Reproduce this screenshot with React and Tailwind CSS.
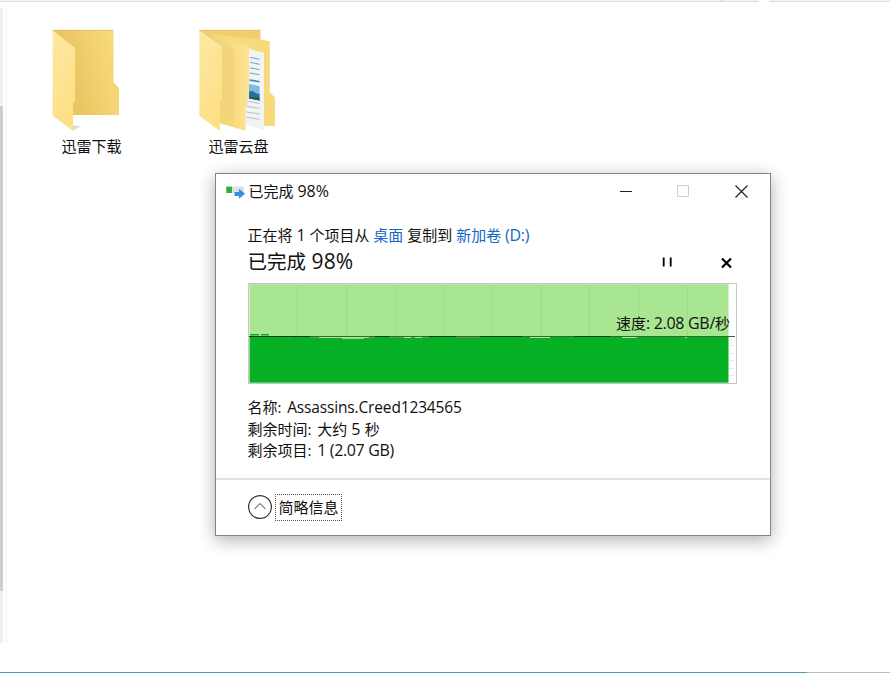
import clsx from 'clsx';

const Latin = ({ children, className }) => (
  <span className={clsx("whitespace-pre", className)}>{children}</span>
);

const FolderIcon = () => (
  <svg width="80" height="104" viewBox="50 28 80 104">
    <defs>
      <linearGradient id="back" x1="0" y1="0.3" x2="1" y2="0">
        <stop offset="0.2" stopColor="#e9c662" />
        <stop offset="1" stopColor="#fbdd80" />
      </linearGradient>
      <linearGradient id="front" x1="0" y1="0" x2="0.4" y2="1">
        <stop offset="0" stopColor="#fde9a4" />
        <stop offset="1" stopColor="#fddf85" />
      </linearGradient>
      <linearGradient id="sheet" x1="0" x2="1">
        <stop offset="0.2" stopColor="#f3d57c" />
        <stop offset="0.6" stopColor="#f9dc80" />
        <stop offset="1" stopColor="#fde396" />
      </linearGradient>
      <linearGradient id="shade" x1="0" x2="1">
        <stop offset="0" stopColor="#ccc" />
        <stop offset="1" stopColor="#fff" />
      </linearGradient>
    </defs>
    <path d="M119 110.5L127 111L119 114Z M73 125.5L82 126L73 130.5Z" fill="url(#shade)" opacity="0.7" />
    <path d="M52.5 30H113.5V82L119 88V115H73V60Z" fill="url(#back)" />
    <path d="M52.5 30.3L75 48V101L73 104V131L52.5 115.3Z" fill="url(#front)" />
    <path d="M52.5 30.3H113.5" stroke="#dfbd62" strokeWidth="0.8" />
  </svg>
);

const FolderFilesIcon = () => (
  <svg width="80" height="104" viewBox="197 28 80 104">
    <path d="M199.3 30H260.5V40L269.5 41.5V92L275 98V126L260 125L210 60Z" fill="#f0ce6e" />
    <path d="M210.7 34L260.5 39.5L269.5 41.5V92L275 98V126L264 125.5V60Z" fill="#f8d97b" />
    <path d="M248 48.6L264 52.7V130L245.7 125Z" fill="#f1f3f5" />
    <g stroke="#65aac4" strokeWidth="1">
      <path d="M250 57.3L259.5 59.3M250 62.3L259.5 64.3M250 67.8L259.5 69.6M250 73L259.5 74.8" />
      <path d="M249.5 80L259.5 81.7" stroke="#3487b0" strokeWidth="1.6" />
    </g>
    <path d="M249 84L259.5 86V100.5L249 98.5Z" fill="#78bbe3" />
    <path d="M249 92Q252 90 255 92.5T259.5 93V100.5L249 98.5Z" fill="#25719a" />
    <path d="M249 97L259.5 97.5V100.5L249 98.5Z" fill="#35564e" />
    <path d="M247 101L259.5 103.5M247 106.3L259.5 108.5M246.5 112L259.5 114M246.5 117.3L259.5 119.3" stroke="#b4b8bd" strokeWidth="0.9" />
    <path d="M210.7 34L247 44.8Q249 45.5 249 48V97L245.7 102V129Q245.7 131 243.5 130.3L219 123Z" fill="url(#sheet)" />
    <path d="M211 35L234 50V126.5L219 122Z" fill="#e8c668" opacity="0.2" />
    <path d="M199.3 30.3L220.5 45.2Q222 46.5 222 49V99L220 102.5V131L199.3 115.7Z" fill="url(#front)" />
    <path d="M199.3 30.3H260.5" stroke="#dfbd62" strokeWidth="0.8" />
  </svg>
);

const CopyIcon = () => (
  <svg width="20" height="16" viewBox="0 0 20 16">
    <path d="M0 2.5H18V9H0Z" fill="#e0e1e2" />
    <path d="M0.3 2.7H6V9H0.3Z" fill="#2eae3c" />
    <path d="M8.5 8H13V4.8L19 9.8L13 14.8V12H8.5Z" fill="#3290df" />
  </svg>
);

const gridX = [49.5, 98.5, 147.5, 196.5, 244.5, 293.5, 341.5, 390.5, 439.5];
const gridY = [62.5, 70.5, 77.5, 85.5, 92.5];

const SpeedChart = () => (
  <svg className="block" width="489" height="101" viewBox="0 0 489 101">
    <rect x="0.5" y="0.5" width="488" height="100" fill="#fff" stroke="#c6c8c6" />
    <rect x="1.5" y="1" width="479" height="52" fill="#a8e692" />
    <rect x="1" y="1" width="479.5" height="1" fill="#bfe2b3" />
    {gridX.map((x) => (
      <path key={x} d={`M${x} 2V53`} stroke="#98df87" />
    ))}
    {gridY.map((y) => (
      <path key={y} d={`M481 ${y}H486`} stroke="#d9f3d8" />
    ))}
    <rect x="1.5" y="54" width="479" height="45.7" fill="#06b025" />
    <path d="M2 51.7H11M13 51.7H21" stroke="#17a42c" strokeWidth="1.4" />
    <path d="M39 54.5H43M62 54.5H127M141 54.5H181M208 54.5H232" stroke="#4f9f4c" />
    <path d="M71 54.5H121M156 54.5H163M167 54.5H174M282 54.5H302M374 54.5H389M437 54.5H439" stroke="#a8e692" />
    <path d="M94 55.5H116" stroke="#8edf7e" />
    <path d="M1 53.5H487" stroke="#3d6335" strokeWidth="1.2" />
    <path d="M1 53.5H62M127 53.5H141M181 53.5H208M232 53.5H274M327 53.5H362" stroke="#063d0b" strokeWidth="1.2" />
  </svg>
);

const folders = [
  { name: '迅雷下载', icon: <FolderIcon /> },
  { name: '迅雷云盘', icon: <FolderFilesIcon /> },
];

const TitleBar = () => (
  <div className="flex h-[35px] items-center pl-[10px] pr-[21px]">
    <CopyIcon />
    <div className="-mt-px ml-[2.5px] leading-5">
      已完成<Latin className="text-[16px] tracking-[-0.1px]"> 98%</Latin>
    </div>
    <div className="ml-auto flex items-center gap-[43px]">
      <svg width="14" height="14" fill="none" stroke="#222">
        <path d="M1 6.5H13" />
      </svg>
      <svg width="14" height="14" fill="none" stroke="#cfcfcf">
        <path d="M1.5 0.5H12.5V11.5H1.5Z" />
      </svg>
      <svg className="ml-[2px]" width="14" height="14" fill="none" stroke="#222" strokeWidth="1.2">
        <path d="M0.5 0.5L12.5 12.5M12.5 0.5L0.5 12.5" />
      </svg>
    </div>
  </div>
);

const CopyDialog = () => (
  <div className="absolute left-[215px] top-[173px] flex h-[363px] w-[556px] flex-col border border-[#858585] bg-white shadow-[0_4px_16px_rgba(0,0,0,0.32)]">
    <TitleBar />
    <div className="flex flex-col pl-[31.5px] pt-4">
      <div className="h-5 leading-5">
        正在将<Latin className="text-[16px] tracking-[-0.2px]"> 1 </Latin>个项目从<Latin> </Latin>
        <span className="text-[#1268c4]">桌面</span>
        <Latin> </Latin>复制到<Latin> </Latin>
        <span className="text-[#1268c4]">
          新加卷<Latin className="text-[16px] tracking-[-0.3px]"> (D:)</Latin>
        </span>
      </div>
      <div className="flex h-8 items-center pr-[37px]">
        <div className="text-[19.5px] leading-8">
          已完成<Latin className="text-[21px] tracking-[0.1px]"> 98%</Latin>
        </div>
        <svg className="ml-auto mt-0.5" width="12" height="12" stroke="#000" strokeWidth="1.8">
          <path d="M1.7 1.5V10.5M8.7 1.5V10.5" />
        </svg>
        <svg className="ml-[47.5px] mt-[3px]" width="12" height="12" stroke="#000" strokeWidth="2.2">
          <path d="M1 1.5L10 10.5M10 1.5L1 10.5" />
        </svg>
      </div>
      <div className="relative ml-[0.5px] mt-[6px] w-[489px]">
        <SpeedChart />
        <div className="absolute right-[7px] top-[30px] leading-5">
          速度<Latin className="text-[16px] tracking-[-0.3px]">: 2.08 GB/</Latin>秒
        </div>
      </div>
      <div className="mt-[13px] leading-[21.5px]">
        <div>名称<Latin className="tracking-[-0.7px]">:  </Latin><Latin className="text-[15.5px] tracking-[-0.15px]">Assassins.Creed1234565</Latin></div>
        <div>剩余时间<Latin className="tracking-[-0.7px]">:  </Latin>大约<Latin className="text-[16px]"> 5 </Latin>秒</div>
        <div>剩余项目<Latin className="tracking-[-0.7px]">:  </Latin><Latin className="text-[16px] tracking-[-0.35px]">1 (2.07 GB)</Latin></div>
      </div>
    </div>
    <div className="mt-auto flex h-[57px] items-center border-t-2 border-[#e3e3e3] pl-8">
      <svg className="-mt-px" width="24" height="24" fill="none" stroke="#333">
        <circle cx="12" cy="12" r="11.4" strokeWidth="1.2" />
        <path d="M6.5 14L12 8.5L17.5 14" />
      </svg>
      <div className="ml-[3px] h-[27px] w-[67px] border border-dotted border-[#555] text-center leading-[25px]">
        简略信息
      </div>
    </div>
  </div>
);

const App = () => (
  <div className="relative flex h-[673px] w-[890px] flex-col overflow-hidden bg-white font-['Open_Sans','Noto_Sans_CJK_SC',sans-serif] text-[15px] text-[#111]">
    <div className="flex h-[2px] gap-[10px]">
      <div className="flex w-[759px] justify-end border-b border-[#dedede] bg-[#f1f1f1] pr-[37px]">
        <div className="w-[2px] bg-[#dcdcdc]" />
      </div>
      <div className="flex-1 border-b border-[#dedede] bg-[#f1f1f1]" />
    </div>
    <div className="mt-[6px] flex h-[635px]">
      <div className="w-[3px] bg-[#f0f0f0] pt-[98px]">
        <div className="h-[485px] w-[2.5px] bg-[#cdcdcd]" />
      </div>
      <div className="ml-[2px] w-[2px] bg-[#f7f7f7]" />
      <div className="ml-[43px] mt-[20px] flex gap-[67px]">
        {folders.map((folder) => (
          <div key={folder.name} className="flex w-20 flex-col">
            {folder.icon}
            <div className="mt-[3px] w-[83px] text-center leading-[22px]">{folder.name}</div>
          </div>
        ))}
      </div>
    </div>
    <div className="mt-auto flex h-px">
      <div className="w-[807px] bg-[#4c9abb]" />
      <div className="flex-1 bg-[#b9b9b9]" />
    </div>
    <CopyDialog />
  </div>
);

export default App;
